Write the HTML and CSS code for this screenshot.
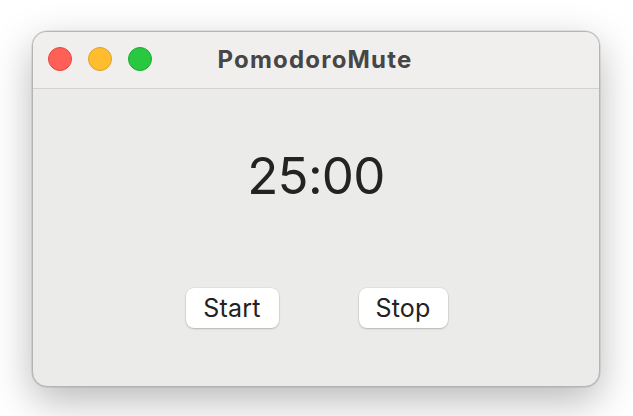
FILE: index.html
```html
<!DOCTYPE html>
<html>
<head>
<meta charset="utf-8">
<link rel="stylesheet" href="styles.css">
</head>
<body>
<div class="window">
  <div class="titlebar">
    <div class="lights">
      <span class="light red"></span>
      <span class="light yellow"></span>
      <span class="light green"></span>
    </div>
    <div class="title">PomodoroMute</div>
  </div>
  <div class="content">
    <div class="timer">25:00</div>
    <div class="buttons">
      <button class="btn start">Start</button>
      <button class="btn stop">Stop</button>
    </div>
  </div>
</div>
</body>
</html>
```
FILE: styles.css
```css
html, body {
  margin: 0;
  padding: 0;
  background: #ffffff;
}
body {
  width: 633px;
  height: 416px;
  overflow: hidden;
  padding: 31px 0 0 32px;
  box-sizing: border-box;
  font-family: Inter, "Liberation Sans", sans-serif;
}
.window {
  width: 568px;
  height: 356px;
  box-sizing: border-box;
  border: 1px solid #b4b4b4;
  border-radius: 15px;
  background: #ebebea;
  box-shadow: 0 14px 40px rgba(0,0,0,0.28), 0 0 0 0.5px rgba(0,0,0,0.15);
  overflow: hidden;
  display: flex;
  flex-direction: column;
}
.titlebar {
  height: 56px;
  flex: none;
  background: #f0efee;
  border-bottom: 1px solid #d2d2d2;
  position: relative;
  display: flex;
  align-items: center;
  justify-content: center;
}
.lights {
  position: absolute;
  left: 15px;
  top: 15px;
  display: flex;
  gap: 16px;
}
.light {
  width: 24px;
  height: 24px;
  border-radius: 50%;
  box-sizing: border-box;
}
.red { background: #fe5f57; border: 1px solid #e2463f; }
.yellow { background: #febc2e; border: 1px solid #e0a028; }
.green { background: #28c840; border: 1px solid #1daa2c; }
.title {
  font-weight: 700;
  font-size: 24px;
  letter-spacing: 1.2px;
  color: #464646;
  margin-top: -2px;
  margin-left: -2px;
}
.content {
  flex: 1;
  display: flex;
  flex-direction: column;
  align-items: center;
  padding-top: 57px;
}
.timer {
  font-size: 51px;
  line-height: 60px;
  letter-spacing: -0.7px;
  color: #232323;
  font-weight: 400;
}
.buttons {
  margin-top: 82px;
  display: flex;
  gap: 80px;
  margin-left: 1px;
}
.btn {
  font-family: Inter, "Liberation Sans", sans-serif;
  font-size: 25px;
  letter-spacing: 0.2px;
  color: #222;
  background: #ffffff;
  border: none;
  border-radius: 8px;
  height: 40px;
  padding: 0;
  box-shadow: 0 1px 2px rgba(0,0,0,0.2), 0 0 0 0.5px rgba(0,0,0,0.08);
}
.start { width: 93px; }
.stop { width: 89px; }
```
